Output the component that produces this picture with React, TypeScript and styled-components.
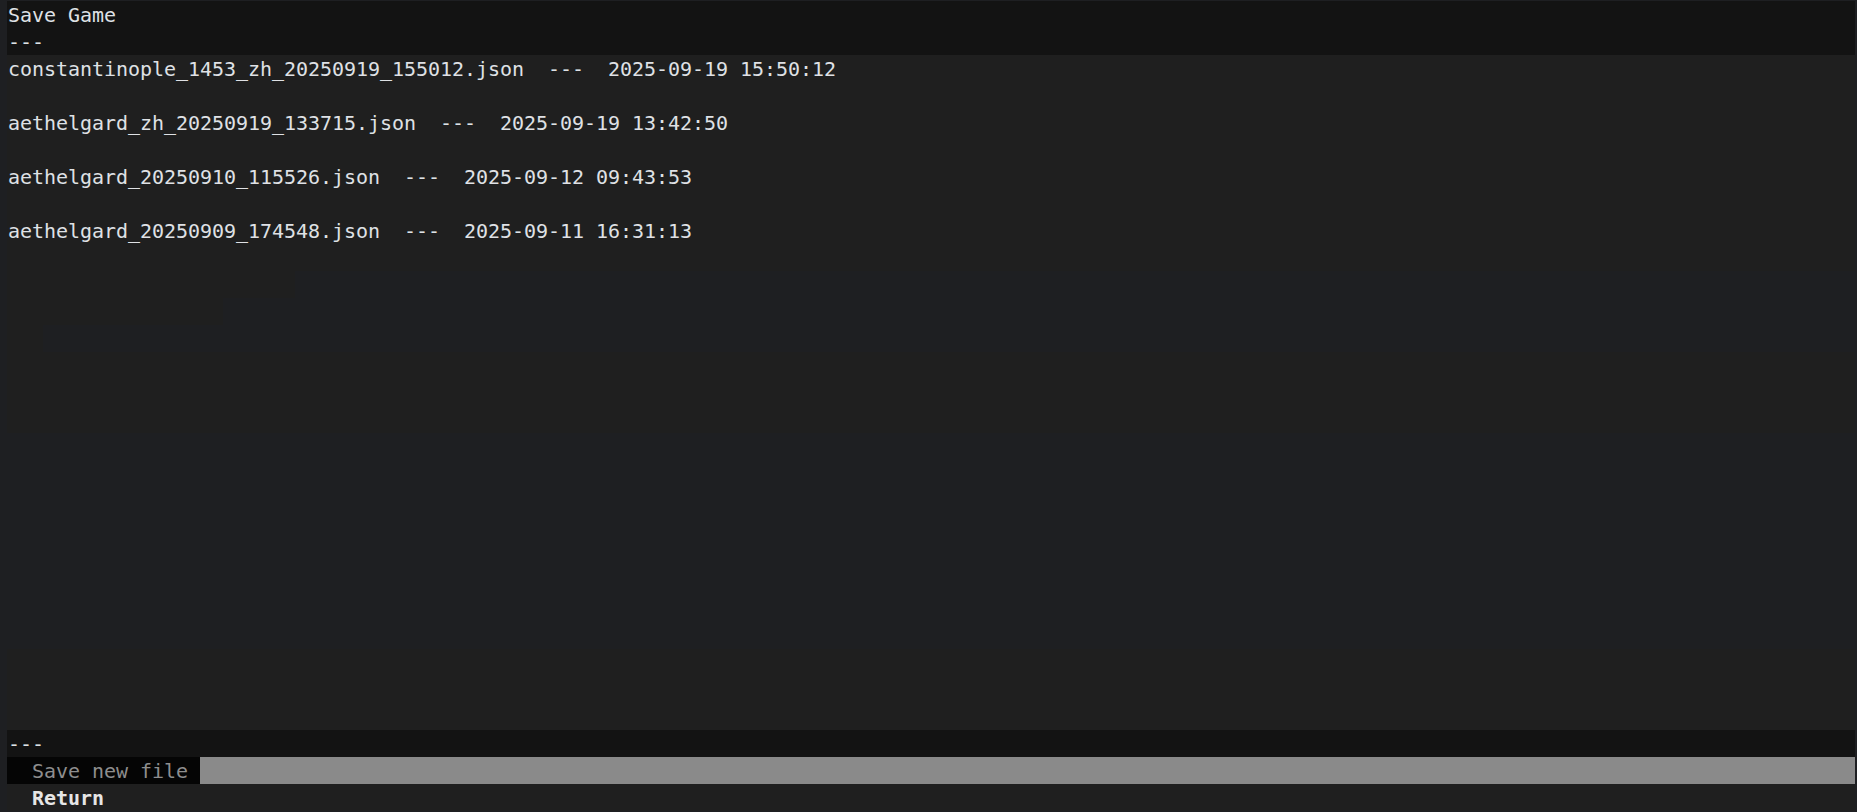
import React from "react";
import styled, { createGlobalStyle } from "styled-components";

const CHAR = 12;

const Global = createGlobalStyle`
  html, body {
    margin: 0;
    padding: 0;
    background: #1e1f22;
    overflow: hidden;
  }
  #root {
    width: 1857px;
    height: 812px;
  }
`;

const Frame = styled.div`
  box-sizing: border-box;
  width: 1857px;
  height: 812px;
  padding: 1px 2px 0 7px;
  background: #1e1f22;
`;

const Terminal = styled.div`
  display: flex;
  flex-direction: column;
  font-family: "DejaVu Sans Mono", "Liberation Mono", monospace;
  font-size: 20px;
  letter-spacing: -0.04px;
  color: #dfe1e5;
  background: #1f1f1f;
`;

type Tone = "base" | "stale" | "band" | "none";

const toneColor: Record<Tone, string> = {
  base: "#1f1f1f",
  stale: "#1e1f22",
  band: "#131313",
  none: "transparent",
};

const Line = styled.div<{ $tone?: Tone }>`
  box-sizing: border-box;
  height: 27px;
  padding: 1px 0 0 1px;
  line-height: 26px;
  white-space: pre;
  background: ${(p) => toneColor[p.$tone ?? "base"]};
`;

const Band = styled.div`
  display: flex;
  flex-direction: column;
  background: #131313;
`;

const SplitLine = styled.div`
  display: flex;
  height: 27px;
`;

const Segment = styled.div<{ $tone: Tone; $cols?: number }>`
  background: ${(p) => toneColor[p.$tone]};
  ${(p) => (p.$cols !== undefined ? `width: ${p.$cols * CHAR}px; flex: none;` : "flex: 1;")}
`;

const MenuRow = styled.div`
  display: flex;
  height: 27px;
  line-height: 26px;
  box-sizing: border-box;
  padding-top: 1px;
  white-space: pre;
`;

const MenuLabel = styled.span<{ $selected?: boolean }>`
  flex: none;
  background: ${(p) => (p.$selected ? "#050505" : "transparent")};
  color: ${(p) => (p.$selected ? "#8e8e8e" : "#e6e6e6")};
  font-weight: ${(p) => (p.$selected ? "normal" : "bold")};
  margin-top: -1px;
  padding: 1px 0 0 1px;
`;

const MenuFill = styled.span<{ $selected?: boolean }>`
  flex: 1;
  background: ${(p) => (p.$selected ? "#8a8a8a" : "transparent")};
  margin-top: -1px;
`;

const saves = [
  { file: "constantinople_1453_zh_20250919_155012.json", date: "2025-09-19 15:50:12" },
  { file: "aethelgard_zh_20250919_133715.json", date: "2025-09-19 13:42:50" },
  { file: "aethelgard_20250910_115526.json", date: "2025-09-12 09:43:53" },
  { file: "aethelgard_20250909_174548.json", date: "2025-09-11 16:31:13" },
];

const staircase = [24, 18, 3];
const fillerTones: Tone[] = [
  "base", "base", "base",
  "stale", "stale", "stale", "stale", "stale", "stale", "stale", "stale",
  "base", "base", "base",
];

export default function App() {
  return (
    <>
      <Global />
      <Frame>
        <Terminal>
          <Band>
            <Line $tone="none">Save Game</Line>
            <Line $tone="none">---</Line>
          </Band>
          {saves.map((s) => (
            <React.Fragment key={s.file}>
              <Line>{`${s.file}  ---  ${s.date}`}</Line>
              <Line />
            </React.Fragment>
          ))}
          {staircase.map((cols, i) => (
            <SplitLine key={`st-${i}`}>
              <Segment $tone="base" $cols={cols} />
              <Segment $tone="stale" />
            </SplitLine>
          ))}
          {fillerTones.map((t, i) => (
            <Line key={`f-${i}`} $tone={t} />
          ))}
          <Band>
            <Line $tone="none">---</Line>
          </Band>
          <MenuRow>
            <MenuLabel $selected>{"  Save new file "}</MenuLabel>
            <MenuFill $selected />
          </MenuRow>
          <MenuRow>
            <MenuLabel>{"  Return"}</MenuLabel>
            <MenuFill />
          </MenuRow>
        </Terminal>
      </Frame>
    </>
  );
}
